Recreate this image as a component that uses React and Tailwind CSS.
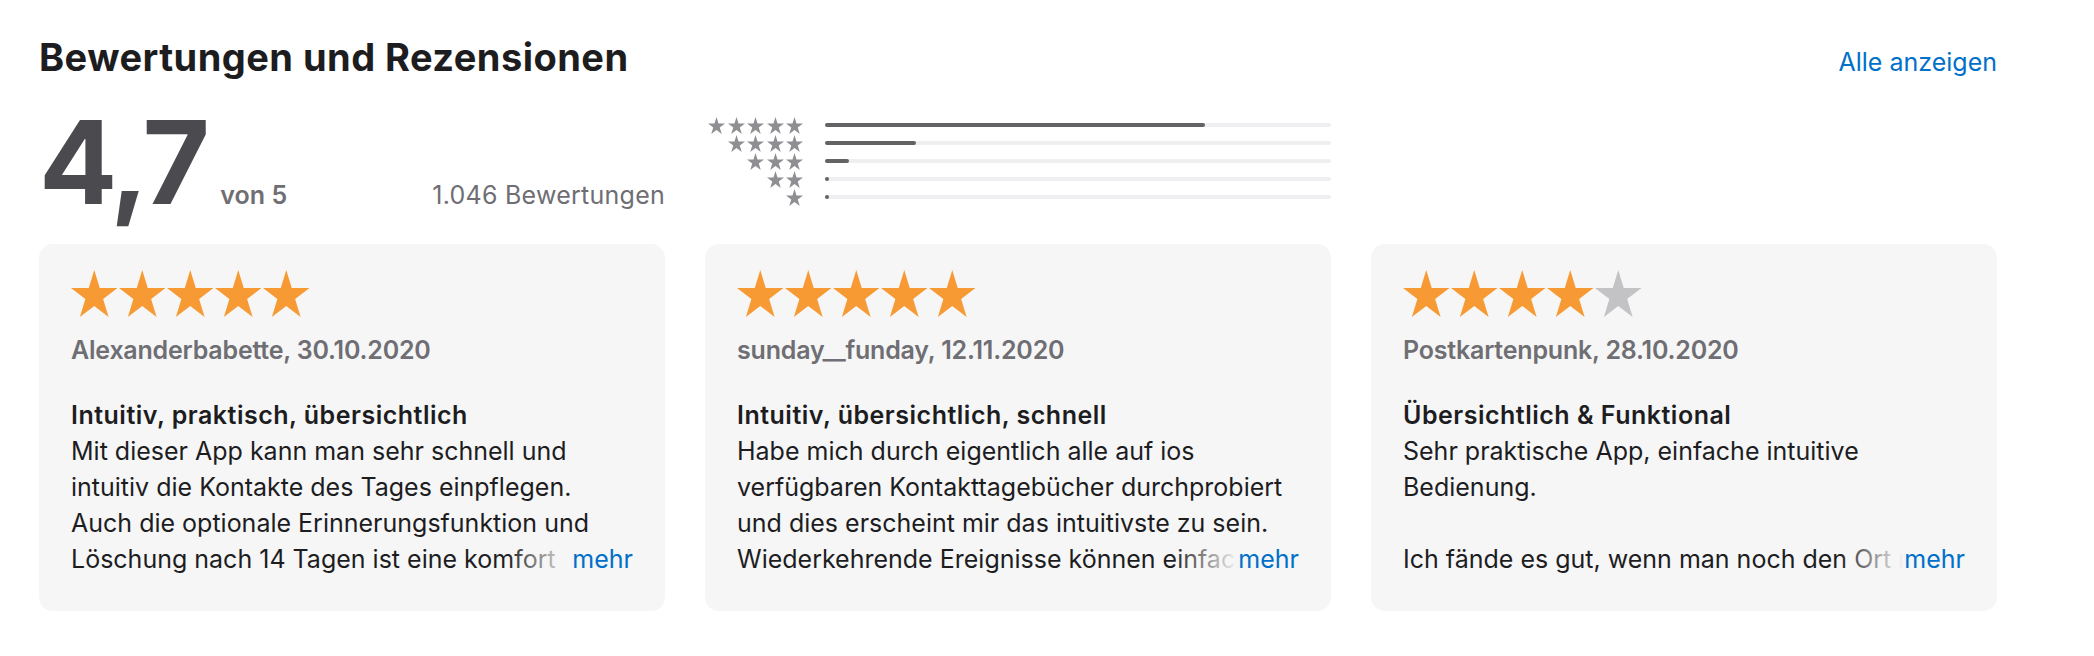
import React from "react";

const FONT = { fontFamily: 'Inter, "Noto Sans", "Liberation Sans", sans-serif' };

function StarShape({ className }) {
  return (
    <svg
      viewBox="1.16 1.2 21.68 20.62"
      preserveAspectRatio="none"
      className={className}
      fill="currentColor"
      aria-hidden="true"
    >
      <path d="M12 1.2L14.56 9.08L22.84 9.08L16.14 13.95L18.7 21.82L12 16.96L5.3 21.82L7.86 13.95L1.16 9.08L9.44 9.08Z" />
    </svg>
  );
}

const hist = [
  { n: 5, pct: 75 },
  { n: 4, pct: 17.9 },
  { n: 3, pct: 4.7 },
  { n: 2, pct: 0.8 },
  { n: 1, pct: 0.8 },
];

const reviews = [
  {
    stars: 5,
    author: "Alexanderbabette, 30.10.2020",
    title: "Intuitiv, praktisch, übersichtlich",
    lines: [
      "Mit dieser App kann man sehr schnell und",
      "intuitiv die Kontakte des Tages einpflegen.",
      "Auch die optionale Erinnerungsfunktion und",
    ],
    last: "Löschung nach 14 Tagen ist eine komfort",
  },
  {
    stars: 5,
    author: "sunday__funday, 12.11.2020",
    title: "Intuitiv, übersichtlich, schnell",
    lines: [
      "Habe mich durch eigentlich alle auf ios",
      "verfügbaren Kontakttagebücher durchprobiert",
      "und dies erscheint mir das intuitivste zu sein.",
    ],
    last: "Wiederkehrende Ereignisse können einfach angelegt werden.",
  },
  {
    stars: 4,
    author: "Postkartenpunk, 28.10.2020",
    title: "Übersichtlich & Funktional",
    lines: ["Sehr praktische App, einfache intuitive", "Bedienung.", "\u00a0"],
    last: "Ich fände es gut, wenn man noch den Ort mit speichern könnte.",
  },
];

function ReviewCard({ r }) {
  return (
    <div className="rounded-[14px] bg-[#f6f6f7] pl-[32px] pr-[32px] pt-[26px] pb-[34px]">
      <div className="flex gap-[1.5px]">
        {[0, 1, 2, 3, 4].map((i) => (
          <StarShape
            key={i}
            className={
              "w-[46.5px] h-[47px] " +
              (i < r.stars ? "text-[#f79a34]" : "text-[#c3c3c5]")
            }
          />
        ))}
      </div>
      <div className="mt-[15px] text-[25px] leading-[36px] font-semibold tracking-[-0.008em] text-[#6e6e73]">
        {r.author}
      </div>
      <div className="mt-[29px] text-[25px] leading-[36px] font-semibold tracking-[0.02em] text-[#1d1d1f]">
        {r.title}
      </div>
      <div className="text-[25px] leading-[36px] text-[#1d1d1f]">
        {r.lines.map((l, i) => (
          <div key={i} className="whitespace-nowrap overflow-hidden">
            {l}
          </div>
        ))}
        <div className="relative whitespace-nowrap overflow-hidden">
          {r.last}
          <div className="absolute right-0 top-0 h-full flex">
            <span className="w-[66px] h-full bg-gradient-to-r from-[#f6f6f7]/0 to-[#f6f6f7]" />
            <span className="bg-[#f6f6f7] text-[#0070c9]">mehr</span>
          </div>
        </div>
      </div>
    </div>
  );
}

export default function App() {
  return (
    <div className="w-[2094px] h-[656px] bg-white" style={FONT}>
      <div className="ml-[39px] w-[1958px] pt-[36px]">
        <div className="flex items-baseline justify-between">
          <h2 className="text-[38px] leading-[42px] font-bold text-[#1d1d1f] tracking-[0.012em]">
            Bewertungen und Rezensionen
          </h2>
          <a className="text-[25px] leading-[36px] text-[#0070c9]">Alle anzeigen</a>
        </div>

        <div className="mt-[24px] grid grid-cols-3 gap-x-[40px]">
          <div className="flex items-baseline justify-between">
            <div className="flex items-baseline">
              <span className="text-[116px] leading-[116px] font-bold tracking-[-0.03em] text-[#4a4a4f]">
                4,7
              </span>
              <span className="ml-[14px] text-[25px] leading-[36px] font-semibold text-[#6e6e73]">
                von 5
              </span>
            </div>
            <span className="text-[25px] leading-[36px] tracking-[0.01em] text-[#6e6e73]">
              1.046 Bewertungen
            </span>
          </div>

          <div className="pt-[12px] flex flex-col">
            {hist.map((h, idx) => (
              <div key={idx} className="flex items-center h-[18px]">
                <div className="w-[98px] flex justify-end gap-[2.5px]">
                  {Array.from({ length: h.n }).map((_, i) => (
                    <StarShape key={i} className="w-[17px] h-[17px] text-[#8e8e93]" />
                  ))}
                </div>
                <div className="ml-[22px] flex-1 h-[4px] rounded-full bg-[#efeff2]">
                  <div
                    className="h-full rounded-full bg-[#636366]"
                    style={{ width: `${h.pct}%` }}
                  />
                </div>
              </div>
            ))}
          </div>
          <div />
        </div>

        <div className="mt-[24px] grid grid-cols-3 gap-x-[40px]">
          {reviews.map((r, i) => (
            <ReviewCard key={i} r={r} />
          ))}
        </div>
      </div>
    </div>
  );
}
